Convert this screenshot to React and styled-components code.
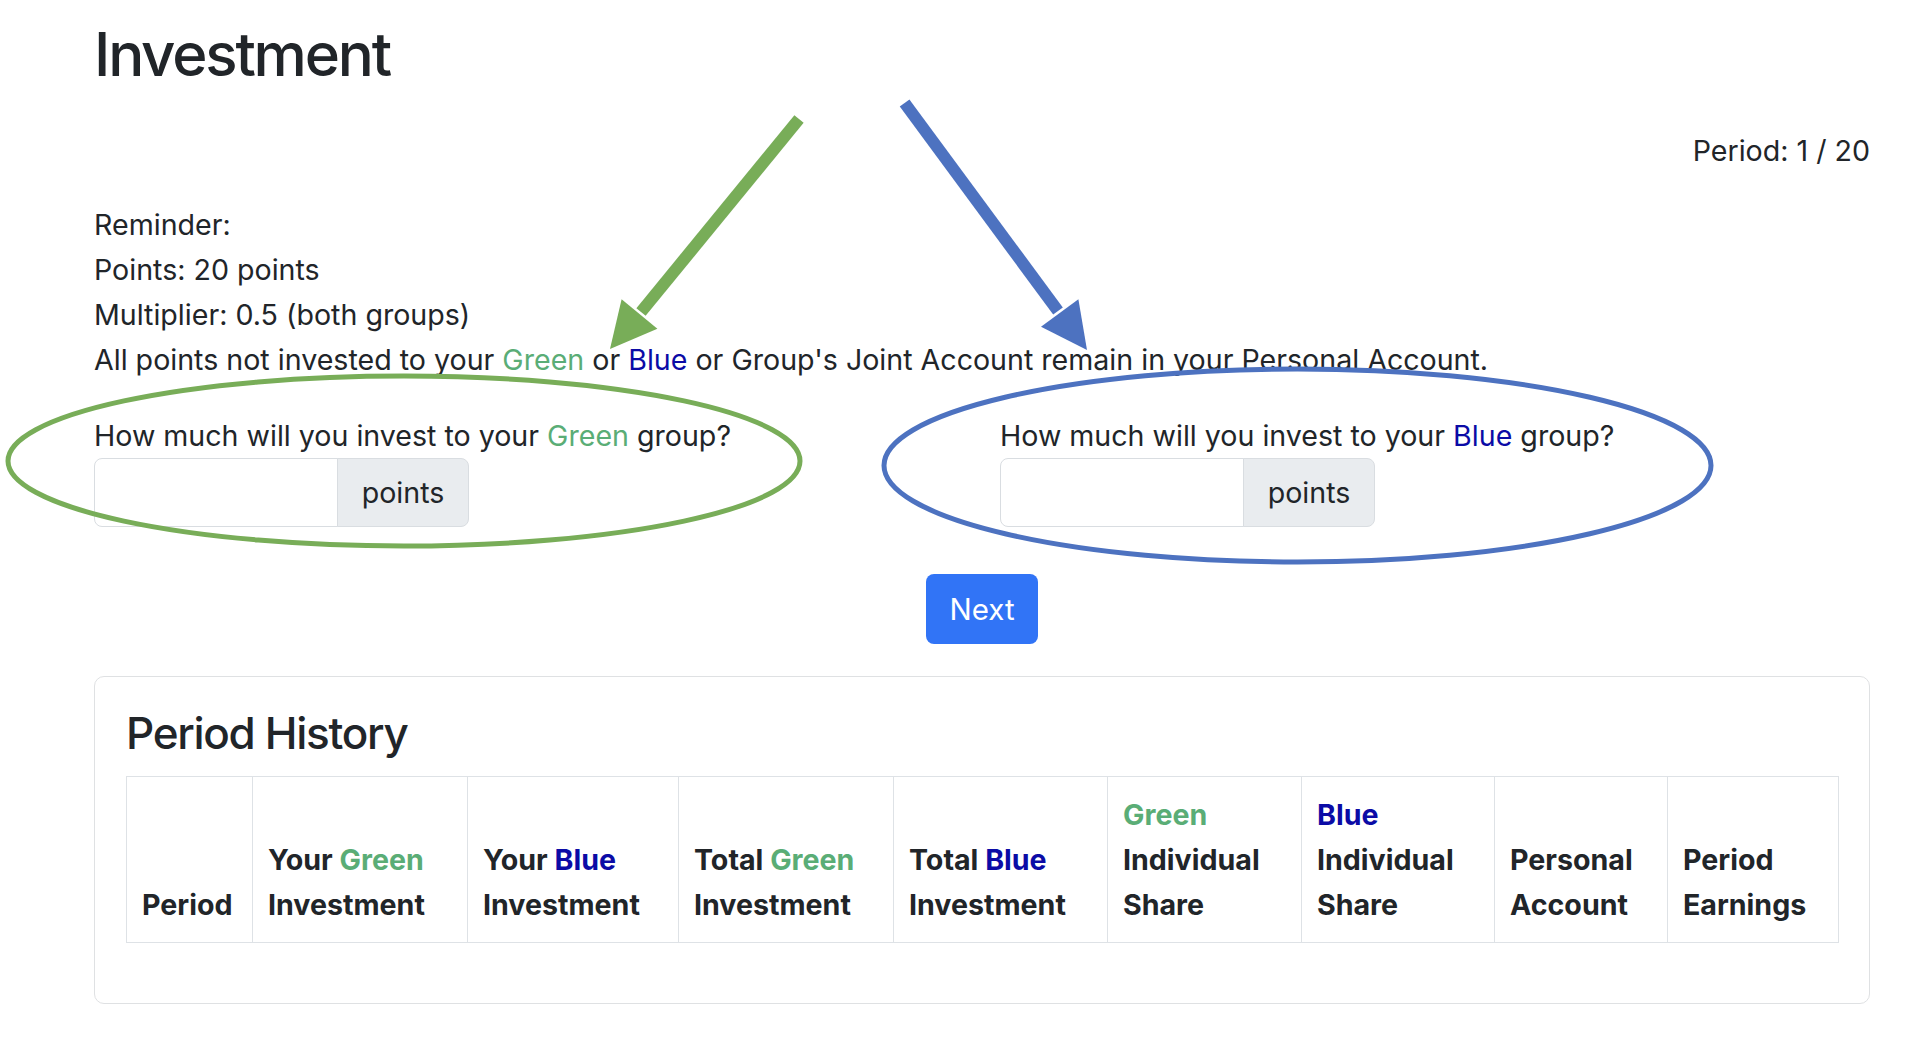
import React from "react";
import styled, { createGlobalStyle } from "styled-components";

const GREEN = "#5aad76";
const BLUE = "#0b0ba6";

const GlobalStyle = createGlobalStyle`
  body {
    margin: 0;
    background: #fff;
    color: #212529;
    font-family: Inter, "Noto Sans", sans-serif;
    font-size: 28.6px;
    line-height: 45px;
  }
  * { box-sizing: border-box; }
`;

const Page = styled.div`
  position: relative;
  min-height: 1051px;
  padding: 18px 46px 0 94px;
`;

const Title = styled.h1`
  margin: 0;
  font-size: 60px;
  font-weight: 500;
  line-height: 72px;
  letter-spacing: -2.2px;
`;

const PeriodCounter = styled.div`
  margin-top: 38px;
  text-align: right;
`;

const Reminder = styled.div`
  margin-top: 29px;
  p {
    margin: 0;
  }
`;

const Colored = styled.span`
  color: ${(p) => (p.$blue ? BLUE : GREEN)};
`;

const QuestionRow = styled.div`
  display: grid;
  grid-template-columns: 906px 1fr;
  margin-top: 31px;
`;

const Question = styled.div`
  display: flex;
  flex-direction: column;
`;

const InputGroup = styled.div`
  display: flex;
  width: 375px;
  height: 69px;
  input {
    width: 244px;
    height: 100%;
    border: 1px solid #d9dde1;
    border-radius: 8px 0 0 8px;
    font: inherit;
    padding: 0 22px;
    outline: none;
  }
  span {
    flex: 1;
    display: flex;
    align-items: center;
    justify-content: center;
    margin-left: -1px;
    background: #e9ecef;
    border: 1px solid #d9dde1;
    border-radius: 0 8px 8px 0;
  }
`;

const ButtonRow = styled.div`
  display: flex;
  justify-content: center;
  margin-top: 47px;
`;

const NextButton = styled.button`
  width: 112px;
  height: 70px;
  border: none;
  border-radius: 8px;
  background: #3174f6;
  color: #fff;
  font: inherit;
  font-size: 29.5px;
  cursor: pointer;
`;

const Card = styled.div`
  margin-top: 32px;
  border: 1px solid #dfe1e3;
  border-radius: 10px;
  padding: 30px 31px;
`;

const CardTitle = styled.h2`
  margin: 0 0 16px;
  font-size: 44px;
  font-weight: 500;
  line-height: 53px;
  letter-spacing: -1.3px;
`;

const Table = styled.table`
  width: 100%;
  table-layout: fixed;
  border-collapse: collapse;
  margin-bottom: 30px;
`;

const Col = styled.col`
  width: ${(p) => p.$w}px;
`;

const Th = styled.th`
  border: 1px solid #dee2e6;
  padding: 15px 15px;
  text-align: left;
  vertical-align: bottom;
  font-weight: 700;
`;

const Overlay = styled.svg`
  position: absolute;
  top: 0;
  left: 0;
  pointer-events: none;
`;

const columns = [
  { w: 126, label: <>Period</> },
  { w: 215, label: <>Your <Colored>Green</Colored> Investment</> },
  { w: 211, label: <>Your <Colored $blue>Blue</Colored> Investment</> },
  { w: 215, label: <>Total <Colored>Green</Colored> Investment</> },
  { w: 214, label: <>Total <Colored $blue>Blue</Colored> Investment</> },
  { w: 194, label: <><Colored>Green</Colored> Individual Share</> },
  { w: 193, label: <><Colored $blue>Blue</Colored> Individual Share</> },
  { w: 173, label: <>Personal Account</> },
  { w: 171, label: <>Period Earnings</> },
];

function Arrow({ from, base, head, color }) {
  return (
    <g fill={color} stroke={color}>
      <line x1={from[0]} y1={from[1]} x2={base[0]} y2={base[1]} strokeWidth="12" />
      <polygon points={head.map((p) => p.join(",")).join(" ")} stroke="none" />
    </g>
  );
}

function Annotations() {
  return (
    <Overlay width="1916" height="1051" viewBox="0 0 1916 1051">
      <Arrow
        color="#78ad58"
        from={[799, 119]}
        base={[641, 312]}
        head={[[610, 349], [621.6, 299.3], [657.4, 328.7]]}
      />
      <Arrow
        color="#4d72c0"
        from={[904.6, 103]}
        base={[1058, 311]}
        head={[[1087, 350], [1041, 326.8], [1078.4, 299.2]]}
      />
      <ellipse cx="404" cy="461" rx="396" ry="85" fill="none" stroke="#78ad58" strokeWidth="5" />
      <ellipse cx="1297.5" cy="465.5" rx="413.5" ry="96.5" fill="none" stroke="#4d72c0" strokeWidth="5" />
    </Overlay>
  );
}

export default function App() {
  return (
    <Page>
      <GlobalStyle />
      <Title>Investment</Title>
      <PeriodCounter>Period: 1 / 20</PeriodCounter>
      <Reminder>
        <p>Reminder:</p>
        <p>Points: 20 points</p>
        <p>Multiplier: 0.5 (both groups)</p>
        <p>
          All points not invested to your <Colored>Green</Colored> or{" "}
          <Colored $blue>Blue</Colored> or Group's Joint Account remain in your Personal Account.
        </p>
      </Reminder>
      <QuestionRow>
        <Question>
          <div>
            How much will you invest to your <Colored>Green</Colored> group?
          </div>
          <InputGroup>
            <input type="number" />
            <span>points</span>
          </InputGroup>
        </Question>
        <Question>
          <div>
            How much will you invest to your <Colored $blue>Blue</Colored> group?
          </div>
          <InputGroup>
            <input type="number" />
            <span>points</span>
          </InputGroup>
        </Question>
      </QuestionRow>
      <ButtonRow>
        <NextButton>Next</NextButton>
      </ButtonRow>
      <Card>
        <CardTitle>Period History</CardTitle>
        <Table>
          <colgroup>
            {columns.map((c, i) => (
              <Col key={i} $w={c.w} />
            ))}
          </colgroup>
          <thead>
            <tr>
              {columns.map((c, i) => (
                <Th key={i}>{c.label}</Th>
              ))}
            </tr>
          </thead>
        </Table>
      </Card>
      <Annotations />
    </Page>
  );
}
